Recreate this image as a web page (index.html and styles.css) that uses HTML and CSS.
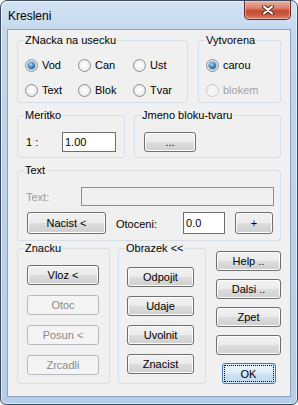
FILE: index.html
```html
<!DOCTYPE html>
<html lang="cs">
<head>
    <meta charset="UTF-8">
    <title>Kresleni</title>
    <link rel="stylesheet" href="styles.css">
</head>
<body>

<div class="window">
    <div class="titlebar">
        <span class="title">Kresleni</span>
        <button class="close">
            <svg width="12" height="10" viewBox="0 0 12 10">
                <path d="M2 1.5 L10 8.5 M10 1.5 L2 8.5" stroke="#5a2018" stroke-width="4" stroke-linecap="round"/>
                <path d="M2 1.5 L10 8.5 M10 1.5 L2 8.5" stroke="#fff" stroke-width="2.2" stroke-linecap="round"/>
            </svg>
        </button>
    </div>

    <div class="client">

        <!-- Znacka / Vytvorena -->
        <div class="row">
            <fieldset class="group g-znacka">
                <legend>ZNacka na usecku</legend>
                <div class="radio-grid">
                    <label class="radio"><span class="dot checked"></span>Vod</label>
                    <label class="radio"><span class="dot"></span>Can</label>
                    <label class="radio"><span class="dot"></span>Ust</label>
                    <label class="radio"><span class="dot"></span>Text</label>
                    <label class="radio"><span class="dot"></span>Blok</label>
                    <label class="radio"><span class="dot"></span>Tvar</label>
                </div>
            </fieldset>
            <fieldset class="group g-vytvorena">
                <legend>Vytvorena</legend>
                <div class="radio-grid single">
                    <label class="radio"><span class="dot checked"></span>carou</label>
                    <label class="radio disabled"><span class="dot"></span>blokem</label>
                </div>
            </fieldset>
        </div>

        <!-- Meritko / Jmeno -->
        <div class="row row-mid">
            <fieldset class="group g-meritko">
                <legend>Meritko</legend>
                <div class="line">
                    <span class="scale-label">1 :</span>
                    <input type="text" class="field scale-input" value="1.00">
                </div>
            </fieldset>
            <fieldset class="group g-jmeno">
                <legend>Jmeno bloku-tvaru</legend>
                <button class="btn btn-dots">...</button>
            </fieldset>
        </div>

        <!-- Text -->
        <fieldset class="group g-text">
            <legend>Text</legend>
            <div class="line">
                <span class="text-label">Text:</span>
                <input type="text" class="field text-input" disabled>
            </div>
            <div class="line line-rot">
                <button class="btn btn-nacist">Nacist &lt;</button>
                <span class="rot-label">Otoceni:</span>
                <input type="text" class="field rot-input" value="0.0">
                <button class="btn btn-plus">+</button>
            </div>
        </fieldset>

        <!-- Znacku / Obrazek / buttons -->
        <div class="row row-bottom">
            <fieldset class="group g-znacku">
                <legend>Znacku</legend>
                <div class="stack">
                    <button class="btn">Vloz &lt;</button>
                    <button class="btn" disabled>Otoc</button>
                    <button class="btn" disabled>Posun &lt;</button>
                    <button class="btn" disabled>Zrcadli</button>
                </div>
            </fieldset>
            <fieldset class="group g-obrazek">
                <legend>Obrazek &lt;&lt;</legend>
                <div class="stack">
                    <button class="btn">Odpojit</button>
                    <button class="btn">Udaje</button>
                    <button class="btn">Uvolnit</button>
                    <button class="btn">Znacist</button>
                </div>
            </fieldset>
            <div class="side">
                <button class="btn">Help ..</button>
                <button class="btn">Dalsi ..</button>
                <button class="btn">Zpet</button>
                <button class="btn"></button>
                <button class="btn btn-ok">OK</button>
            </div>
        </div>

    </div>
</div>

</body>
</html>
```

FILE: styles.css
```css
* {
    box-sizing: border-box;
}

body {
    margin: 0;
    font-family: "Liberation Sans", Arial, sans-serif;
    font-size: 11px;
    color: #000;
    background: #fff;
}

/* Window frame */
.window {
    width: 298px;
    height: 405px;
    border: 1px solid #3d4c5e;
    border-radius: 7px 7px 6px 6px;
    padding: 0 6px 7px;
    background: linear-gradient(#d2e2f3, #c0d6ed 40px, #b6cde8);
    box-shadow: inset 0 0 0 1px rgba(255, 255, 255, 0.55);
    display: flex;
    flex-direction: column;
}

.titlebar {
    height: 28px;
    display: flex;
    justify-content: space-between;
    align-items: flex-start;
}

.title {
    font-size: 12px;
    padding: 8px 0 0 1px;
}

.close {
    width: 47px;
    height: 19px;
    padding: 0;
    border: 1px solid #6b2a22;
    border-top: none;
    border-radius: 0 0 5px 5px;
    background: linear-gradient(#eab0a2, #d9806c 40%, #c44a34 55%, #cf5c45 80%, #e08a72);
    box-shadow: inset 0 0 0 1px rgba(255, 220, 210, 0.45);
    display: flex;
    align-items: center;
    justify-content: center;
}

.client {
    flex: 1;
    border: 1px solid #8ea3bb;
    background: #f0f0f0;
    padding: 4px 9px 0;
}

/* Group boxes */
.row {
    display: flex;
    gap: 10px;
}

.group {
    margin: 0;
    min-width: 0;
    border: 1px solid #d5dfe5;
    border-radius: 3px;
    padding: 10px 0 4px 6px;
}

.group legend {
    padding: 0 1px;
    line-height: 13px;
}

.g-znacka {
    width: 171px;
}

.g-vytvorena {
    width: 83px;
}

.row-mid {
    margin-top: 6px;
    gap: 9px;
}

.g-meritko {
    width: 108px;
    padding-bottom: 5px;
}

.g-jmeno {
    width: 147px;
    padding-bottom: 5px;
}

.g-text {
    margin-top: 6px;
    padding-bottom: 6px;
}

.row-bottom {
    margin-top: 1px;
    gap: 0;
}

.g-znacku {
    width: 93px;
    padding-bottom: 7px;
}

.g-obrazek {
    width: 88px;
    margin-left: 8px;
    padding-top: 12px;
    padding-bottom: 7px;
}

/* Radios */
.radio-grid {
    display: grid;
    grid-template-columns: 53px 55px 1fr;
    grid-auto-rows: 16px;
    row-gap: 9px;
    padding-left: 1px;
}

.radio-grid.single {
    grid-template-columns: 1fr;
}

.radio {
    display: flex;
    align-items: center;
    gap: 4px;
}

.radio.disabled {
    color: #a3a3a3;
}

.dot {
    width: 13px;
    height: 13px;
    border-radius: 50%;
    border: 1px solid #8c8f91;
    background: radial-gradient(circle at 50% 45%, #fff 0%, #f4f4f4 45%, #d8d8d8 100%);
    display: flex;
    align-items: center;
    justify-content: center;
}

.dot.checked::after {
    content: "";
    width: 7px;
    height: 7px;
    border-radius: 50%;
    background: radial-gradient(circle at 40% 35%, #b8ddfa 0%, #3a86c8 45%, #134d85 100%);
    box-shadow: 0 0 0 1px rgba(30, 60, 100, 0.35);
}

.radio.disabled .dot {
    border-color: #cbcbcb;
    background: #f4f4f4;
}

/* Lines with inputs */
.line {
    display: flex;
    align-items: center;
}

.field {
    font-family: "Liberation Sans", Arial, sans-serif;
    font-size: 11px;
    border: 1px solid #707070;
    background: #fff;
    padding: 0 2px;
    margin: 0;
    outline: none;
    color: #000;
}

.field:disabled {
    border-color: #8d8d8d;
    background: #f0f0f0;
}

.scale-label {
    width: 38px;
    padding-left: 2px;
}

.scale-input {
    width: 54px;
    height: 20px;
}

.text-label {
    width: 57px;
    padding-left: 2px;
    color: #9c9c9c;
}

.text-input {
    width: 193px;
    height: 19px;
}

.line-rot {
    margin-top: 6px;
}

.rot-label {
    width: 67px;
    margin-left: 10px;
    padding-top: 2px;
}

.rot-input {
    width: 42px;
    height: 22px;
}

/* Buttons */
.btn {
    font-family: "Liberation Sans", Arial, sans-serif;
    font-size: 11px;
    color: #000;
    height: 20px;
    padding: 0;
    border: 1px solid #707070;
    border-radius: 3px;
    background: linear-gradient(#f2f2f2, #ebebeb 48%, #dddddd 52%, #cfcfcf);
    box-shadow: inset 0 0 0 1px #fbfbfb;
}

.btn:disabled {
    color: #8a8a8a;
    border-color: #b5b9bc;
    background: #f4f4f4;
    box-shadow: none;
}

.btn-dots {
    width: 52px;
    margin-left: 3px;
}

.btn-nacist {
    width: 79px;
    height: 22px;
    margin-left: 3px;
}

.btn-plus {
    width: 38px;
    height: 22px;
    margin-left: 10px;
}

.stack {
    display: flex;
    flex-direction: column;
    gap: 10px;
    padding-left: 3px;
}

.stack .btn {
    width: 72px;
}

.g-obrazek .stack {
    gap: 9px;
    padding-left: 2px;
}

.g-obrazek .stack .btn {
    width: 67px;
}

.side {
    width: 65px;
    margin-left: 10px;
    padding-top: 9px;
    display: flex;
    flex-direction: column;
    align-items: center;
    gap: 8px;
}

.side .btn {
    width: 65px;
}

.side .btn-ok {
    width: 54px;
    height: 21px;
    border-color: #3c7fb1;
    background: linear-gradient(#eaf3fa, #dfecf7 48%, #cfe2f2 52%, #c2d9ee);
    box-shadow: inset 0 0 0 1px #d4ecfb;
    outline: 1px dotted #000;
    outline-offset: -3px;
}
```
